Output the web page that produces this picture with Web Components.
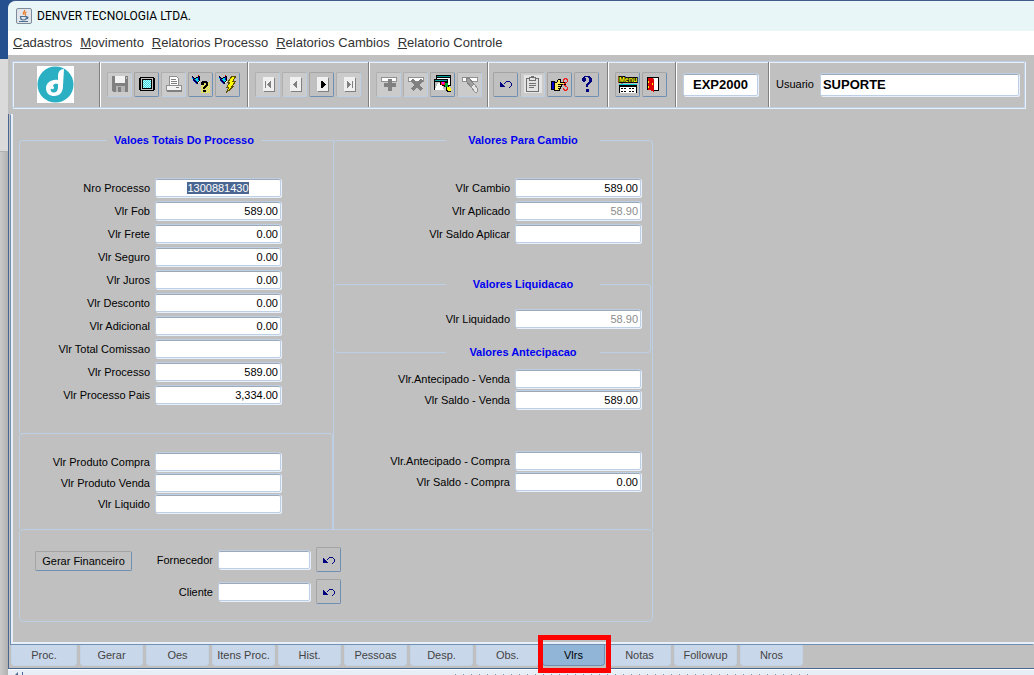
<!DOCTYPE html>
<html lang="pt-BR">
<head>
<meta charset="utf-8">
<title>DENVER TECNOLOGIA LTDA.</title>
<style>
  body {
    margin: 0;
    font: 11px/14px "Liberation Sans", Arial, sans-serif;
    color: #000;
    --face: #c0c0c0;
    --line: #bccfe4;
    --shine: #e8eff8;
    --steel: #6f8fb3;
    --navy: #4a6690;
  }
</style>
</head>
<body>
<app-desktop>
  <app-window caption="DENVER TECNOLOGIA LTDA.">
    <menu-bar slot="menu">
      <menu-entry>Cadastros</menu-entry>
      <menu-entry>Movimento</menu-entry>
      <menu-entry>Relatorios Processo</menu-entry>
      <menu-entry>Relatorios Cambios</menu-entry>
      <menu-entry>Relatorio Controle</menu-entry>
    </menu-bar>
    <tool-bar slot="tools"></tool-bar>
    <values-form></values-form>
    <tab-strip slot="tabs" active="Vlrs"
      labels="Proc.|Gerar|Oes|Itens Proc.|Hist.|Pessoas|Desp.|Obs.|Vlrs|Notas|Followup|Nros"></tab-strip>
  </app-window>
</app-desktop>

<script>
/* ---------- icon drawings ---------- */
const pixels = (rows, colours, ox = 0, oy = 0) => rows.map((row, y) =>
  [...row].map((c, x) => colours[c]
    ? `<rect x="${x + ox}" y="${y + oy}" width="1" height="1" fill="${colours[c]}"/>` : '').join('')).join('');

const undoRows = [
  '......####..',
  '#....#....#.',
  '##..#......#',
  '###........#',
  '####.......#',
  '#####.....#.',
  '.........#..'
];
const plane = pixels([
  '......r.',
  'k.....kk',
  'bk..kkbk',
  'cbkkccbk',
  '.kbcccbk',
  '.bkbccck',
  '..bkbckw',
  '...bkkw.',
  '....bk..'
], {r: '#f00', k: '#000', b: '#0000c0', c: '#00d8e8', w: '#fff'});
const page = body => `<path fill="#f0f0f0" d="M4 2h11v14H4z"/><path fill="#808080" d="M15 3h1v14H5v-1h10z"/>${body}`;
const formWindow = '<path fill="#fff" stroke="#909090" d="M1.500 2.500h15v4h-15z"/>';

const ICONS = {
  save: '<path fill="#808080" d="M1 1h16v16H2l-1-1z"/><path fill="#f2f2f2" d="M4 1h10v7H4z"/><path fill="#b4b4b4" d="M5 11h9v6H5z"/><path fill="#808080" d="M7 12h3v5H7z"/><path fill="#c0c0c0" d="M15 2h1v2h-1z"/>',
  screen: '<path d="M2 2h14v1h1v12h-1v1H2v-1H1V3h1z"/><path fill="#c0c0c0" d="M3 3h12v12H3z"/><path d="M4 4h10v10H4z"/><path fill="#b8ffff" d="M5 5h8v8H5z"/>' +
    pixels(['#.#.#.#.', '.#.#.#.#', '#.#.#.#.', '.#.#.#.#', '#.#.#.#.', '.#.#.#.#', '#.#.#.#.', '.#.#.#.#'], {'#': '#40d8e0'}, 5, 5),
  print: '<path fill="#fff" stroke="#909090" d="M4.500 1.500h7l2 2v7h-9z"/><path stroke="#808080" d="M6 4.500h5M6 6.500h6M6 8.500h6"/><path fill="#f4f4f4" stroke="#909090" d="M1.500 10.500h15v5h-15z"/><path fill="#808080" d="M2 15h15v2H2zM11 12h3v1h-3z"/>',
  query: plane + pixels(['#.#.#.#.#', '.#.#.#.#.', '#.#.#.#.#', '.#.#.#.#.', '#.#.#.#.#', '.#.#.#.#.', '#.#.#.#.#', '.#.#.#.#.', '#.#.#.#.#', '.#.#.#.#.', '#.#.#.#.#'], {'#': '#ffff20'}, 9, 7) +
    '<path d="M9 7h1V6h5v1h1v4h-1v1h-1v1h-1v1h-2v-2h1v-1h1v-1h1V8h-2v2H9zM11 15h3v2h-3z"/>',
  run: plane + '<path fill="#ff0" stroke="#605000" d="M13 1h4l-3 5h3l-4 5h2l-8 7 3-6H8l3-5H9z"/>',
  first: page('<path fill="#808080" d="M6 6h1v7H6zM8 9h1V8h1V7h1V6h1v7h-1v-1h-1v-1H9v-1H8z"/>'),
  prev: page('<path fill="#808080" d="M7 9h1V8h1V7h1V6h1v7h-1v-1H9v-1H8v-1H7z"/>'),
  next: page('<path d="M8 6h2v1h1v1h1v1h1v1h-1v1h-1v1h-1v1H8z"/>'),
  last: page('<path fill="#808080" d="M7 6h1v1h1v1h1v1h1v1h-1v1H9v1H8v1H7zM12 6h1v7h-1z"/>'),
  add: formWindow + '<path fill="#808080" d="M8 4h4v4h4v4h-4v4H8v-4H4V8h4z"/>',
  remove: formWindow + '<path stroke="#808080" stroke-width="3" d="m5 5 10 10m0-10L5 15"/>',
  edit: '<path d="M2 0h15v11H2z"/><path fill="#00a0a0" d="M3 1h13v1H3z"/><path fill="#fff" d="M3 3h13v7H3z"/><path d="M0 4h14v11H0z"/><path fill="#00a0a0" d="M1 5h12v1H1z"/><path fill="#c0c0c0" d="M1 7h12v8H1z"/><path fill="#fff" d="M1 15c1-5 3-7 6-8l3 8z"/><path d="M7 6h4v1h3v3h1v3h-3v-1h-2v-1H8v-1H6V7h1z"/><path fill="#f02020" d="M7 7h4v3H7z"/><path fill="#f0f" d="M8 7h2v2H8z"/><path fill="#00b030" d="M11 8h3v4h-3z"/><path d="M12 12h4v1h1v4h-4v-1h-1z"/><path fill="#ff0" d="M13 12h3v1h1v3h-3v-1h-1z"/>',
  clear: formWindow + '<path fill="#a0a0a0" stroke="#808080" d="m5 4 3-1 5 6-3 3-5-6z"/><path fill="#e8e8e8" stroke="#909090" d="m10 12 3-3 4 5-1 3h-2z"/>',
  undo: pixels(undoRows, {'#': '#000080'}, 3, 6),
  paste: '<path fill="#e4e4e4" d="M0 0h18v18H0z"/><path fill="none" stroke="#707070" d="M6 3.500H2.500v13h12v-13H11M5.500 2.500h6v3h-6zM7 1.500h3M5 8.500h7M5 10.500h7M5 12.500h5"/>',
  cut: '<path fill="#0000d0" stroke="#000" d="M.5 6.500h3v8h-3z"/><path fill="#ffe860" stroke="#000" d="M3.500 7.500h2l2-3h2v3h5v2h-4v2h-1v2h-1v2h-5z"/><path stroke="#000" d="M7 9.500h4M7 11.500h3M7 13.500h2"/><path fill="none" stroke="#f02020" d="M12.500 6.500v-2l2-1 2 1v2l-4 3M12.500 12.500v2l2 1 2-1v-2l-4-3"/>',
  help: '<path fill="#000080" d="M5 2h1V1h6v1h1v1h1v4h-1v1h-1v1h-1v1h-1v2H8V9h1V8h1V7h1V3h-1V2H7v1h1v3H7v1H5V6H4V3h1zM8 14h3v3H8z"/>',
  menu: '<text x="0" y="7" font-family="Liberation Sans, sans-serif" font-size="7" font-weight="bold" fill="#ff0" stroke="#000" stroke-width="2" paint-order="stroke">Menu</text><path d="M0 10h18v8H0z"/><path fill="#00d0d0" d="M0 9h18v1H0z"/><path fill="#fff" d="M1 12h16v6H1z"/><path stroke="#000" stroke-dasharray="2 1" d="M2 13.500h5M10 13.500h6M2 16.500h5M10 16.500h6"/>',
  exit: '<path fill="#fff" d="M8 3h5v13H8z"/><path fill="none" stroke="#000" d="M1.500 15V2.500h11v13H8"/><path fill="#e00000" d="M2 3h4l2 2v12l-4-2H2z"/><path fill="#ff0" d="M6 8h1v2H6zM2 6h1v2H2zM2 11h1v2H2z"/>'
};
const icon = name => `<svg width="18" height="18" viewBox="0 0 18 18" shape-rendering="crispEdges" aria-hidden="true">${ICONS[name]}</svg>`;

const FIELD = `
  input {
    box-sizing: border-box; margin: 0; border: 1px solid var(--line); border-radius: 2px;
    background: #fff; box-shadow: inset 0 1px #9fa9b5, 1px 1px var(--shine);
    font: inherit; color: #000; outline: none; min-width: 0;
  }`;

const define = (name, html, setup) => customElements.define(name, class extends HTMLElement {
  connectedCallback() {
    if (this.shadowRoot) return;
    const root = this.attachShadow({mode: 'open'});
    root.innerHTML = html;
    if (setup) setup.call(this, root);
  }
});

/* ---------- desktop behind the window ---------- */
define('app-desktop', `
  <style>
    :host { display: flex; min-height: 100vh; background: #24508f; }
    .behind { flex: 0 0 8px; display: flex; flex-direction: column; }
    .top { height: 59px; background: #24508f; }
    .mid { height: 92px; background: #dadada; border-bottom: 1px solid #b0b0b0; }
    .low { flex: 1; background: linear-gradient(90deg, #cacaca, #b0b0b0); }
    ::slotted(*) { flex: 1; min-width: 0; }
  </style>
  <div class="behind"><div class="top"></div><div class="mid"></div><div class="low"></div></div>
  <slot></slot>`);

/* ---------- window frame ---------- */
define('app-window', `
  <style>
    :host { display: flex; flex-direction: column; background: var(--face); border-top: 1px solid #3f5b8c; border-top-left-radius: 8px; overflow: hidden; }
    header { display: flex; align-items: center; gap: 5px; height: 30px; padding-left: 8px; background: #e8f6f7; }
    h1 { margin: 0; font: 12px/16px Roboto, "Open Sans", sans-serif; }
    .content { flex: 1; display: flex; flex-direction: column; border-left: 1px solid var(--navy); margin-top: 6px; padding-left: 2px; }
    main { flex: 1; border: solid var(--shine); border-width: 0 0 2px 2px; box-shadow: -1px 1px var(--steel); }
    .tabs { padding-top: 1px; }
    footer { display: flex; align-items: flex-end; height: 6px; border-top: 1px solid var(--navy); box-shadow: inset 0 1px #fff; background: #e8eef6; }
    .arrow { display: block; width: 14px; height: 3px; border-right: 1px solid var(--navy); }
    .grip { margin: 0 auto 0 432px; width: 360px; height: 1px; background: repeating-linear-gradient(90deg, #7f93ad 0 1px, transparent 1px 8px); }
  </style>
  <header>
    <svg width="16" height="16" viewBox="0 0 16 16" aria-hidden="true">
      <rect x=".5" y=".5" width="15" height="15" rx="1.500" fill="#e2e6ea" stroke="#7d8c9a"/>
      <path d="M8.500 2c1 1.500-2 2.500-1 4.500M10.500 4c-2 1-2 2-.5 3.500" fill="none" stroke="#e8761f" stroke-width="1.300"/>
      <path d="M4.500 8.500h6c0 3-1 3.500-3 3.500s-3-.5-3-3.500zM10.500 9c2-.5 2 1.500-.5 2M3 13.500h9" fill="none" stroke="#4f7196" stroke-width="1.200"/>
    </svg>
    <h1></h1>
  </header>
  <slot name="menu"></slot>
  <slot name="tools"></slot>
  <div class="content">
    <main><slot></slot></main>
    <div class="tabs"><slot name="tabs"></slot></div>
  </div>
  <footer>
    <svg class="arrow" viewBox="0 0 14 3" aria-hidden="true"><path fill="#4a6690" d="M10 0v3H7z"/></svg>
    <div class="grip"></div>
  </footer>`,
  function (root) { root.querySelector('h1').textContent = this.getAttribute('caption'); });

/* ---------- menu ---------- */
define('menu-bar', `
  <style>
    :host { display: block; background: #fff; }
    nav { display: flex; align-items: center; gap: 8px; height: 24px; padding-left: 5px; }
  </style>
  <nav><slot></slot></nav>`);

define('menu-entry', `
  <style>
    :host { display: block; }
    button { display: block; border: 0; padding: 0; background: none; font: 13px/16px "Liberation Sans", Arial, sans-serif; color: #333; white-space: nowrap; }
  </style>
  <button type="button"><u></u><span></span></button>`,
  function (root) {
    const text = this.textContent.trim();
    root.querySelector('u').textContent = text[0];
    root.querySelector('span').textContent = text.slice(1);
    this.textContent = '';
  });

/* ---------- toolbar ---------- */
define('tool-button', `
  <style>
    :host { display: block; }
    button {
      display: grid; place-items: center; box-sizing: border-box; width: 25px; height: 25px; padding: 0;
      border: 1px solid; border-color: #a4a4a4 var(--steel) var(--steel) #a4a4a4; border-radius: 2px; background: var(--face);
    }
    button:disabled { background: #cbcbcb; border-color: #b0b0b0 var(--line) var(--line) #b0b0b0; }
    svg { display: block; overflow: visible; }
  </style>
  <button type="button"></button>`,
  function (root) {
    const b = root.querySelector('button');
    b.innerHTML = icon(this.getAttribute('icon'));
    b.title = b.ariaLabel = this.getAttribute('hint');
    b.disabled = this.hasAttribute('off');
  });

define('tool-bar', `
  <style>
    :host { display: block; padding: 6px 9px 0 4px; }
    .bar { display: flex; height: 45px; border: 1px solid var(--line); box-shadow: inset 0 1px var(--shine), 1px 1px var(--shine), inset 1px 0 var(--shine); }
    .cell { display: flex; align-items: center; box-sizing: border-box; gap: 2px; padding: 0 0 1px 6px; border-right: 1px solid #fff; box-shadow: inset -1px 0 #808080; }
    .logo { width: 88px; justify-content: center; padding: 0 2px 1px 0; }
    .file { width: 148px; } .walk { width: 121px; } .rec { width: 119px; } .misc { width: 120px; padding-left: 4px; }
    .out { width: 68px; } .code { width: 93px; }
    .user { flex: 1; border: 0; box-shadow: none; gap: 6px; padding-right: 5px; }
    ${FIELD}
    input { height: 23px; padding: 0 2px; font-weight: bold; font-size: 13px; }
    .code input { width: 75px; text-align: center; }
    .user input { flex: 1; }
    svg { display: block; }
  </style>
  <div class="bar">
    <div class="cell logo">
      <svg width="37" height="37" viewBox="0 0 37 37" role="img" aria-label="Denver">
        <path fill="#fff" d="M0 0h37v37H0z"/><circle cx="18.500" cy="18.500" r="18" fill="#2bafc2"/>
        <path fill="#fff" d="M27 3c-4 0-6 3-6 7v4c-7-1-12 3-12 8.500 0 5 4 7.500 8 7.500 6 0 9-4 9-10z"/>
        <path fill="#2bafc2" d="M21 18v3.500c0 3-2 5-4 5-3 0-4-2-3-4 1 1 3 1 3-1 0-1-1-1-1-2 1-2 3-2 5-1.500z"/>
      </svg>
    </div>
    <div class="cell file">
      <tool-button icon="save" hint="Salvar" off></tool-button><tool-button icon="screen" hint="Tela"></tool-button>
      <tool-button icon="print" hint="Imprimir" off></tool-button><tool-button icon="query" hint="Consultar"></tool-button>
      <tool-button icon="run" hint="Executar"></tool-button>
    </div>
    <div class="cell walk">
      <tool-button icon="first" hint="Primeiro" off></tool-button><tool-button icon="prev" hint="Anterior" off></tool-button>
      <tool-button icon="next" hint="Proximo"></tool-button><tool-button icon="last" hint="Ultimo" off></tool-button>
    </div>
    <div class="cell rec">
      <tool-button icon="add" hint="Incluir" off></tool-button><tool-button icon="remove" hint="Excluir" off></tool-button>
      <tool-button icon="edit" hint="Editar"></tool-button><tool-button icon="clear" hint="Limpar" off></tool-button>
    </div>
    <div class="cell misc">
      <tool-button icon="undo" hint="Desfazer"></tool-button><tool-button icon="paste" hint="Colar" off></tool-button>
      <tool-button icon="cut" hint="Recortar"></tool-button><tool-button icon="help" hint="Ajuda"></tool-button>
    </div>
    <div class="cell out">
      <tool-button icon="menu" hint="Menu"></tool-button><tool-button icon="exit" hint="Sair"></tool-button>
    </div>
    <div class="cell code"><input value="EXP2000" aria-label="Programa" readonly></div>
    <div class="cell user"><label for="user">Usuario</label><input id="user" value="SUPORTE" readonly></div>
  </div>`);

/* ---------- form parts ---------- */
define('value-field', `
  <style>
    :host { display: grid; grid-template-columns: var(--label-width) var(--field-width, 126px); gap: 5px; align-items: center; }
    label { text-align: right; white-space: nowrap; }
    ${FIELD}
    input { height: 19px; padding: 1px 2px 0; text-align: right; }
    input:disabled { color: #8c8c8c; }
    input.marked { text-align: center; }
    input::selection { background: var(--navy); color: #fff; }
  </style>
  <label for="f"></label><input id="f">`,
  function (root) {
    const input = root.querySelector('input');
    root.querySelector('label').textContent = this.getAttribute('label');
    input.value = this.getAttribute('value') || '';
    input.disabled = this.hasAttribute('off');
    if (this.hasAttribute('marked')) {
      input.className = 'marked';
      input.focus({preventScroll: true});
      input.select();
    }
  });

define('field-group', `
  <style>
    :host { display: block; box-sizing: border-box; border: 0 solid var(--line); }
    h2 {
      width: 154px; height: 14px; margin: -8px 0 0 var(--title-left); background: var(--face);
      font: bold 11px/14px "Liberation Sans", Arial, sans-serif; color: #0000f0; text-align: center; white-space: nowrap;
    }
    .rows { display: grid; gap: var(--row-gap, 4px); padding-top: var(--rows-top); }
  </style>
  <h2></h2><div class="rows"><slot></slot></div>`,
  function (root) {
    const h = root.querySelector('h2');
    if (this.hasAttribute('heading')) h.textContent = this.getAttribute('heading'); else h.remove();
  });

define('values-form', `
  <style>
    :host { display: block; padding: 26px 6px 20px; }
    .sheet { display: grid; grid-template-columns: 314px 320px; }
    .left { --label-width: 130px; --title-left: 87px; }
    .right { --label-width: 176px; --title-left: 112px; border-right: 1px solid var(--line); border-left: 1px solid var(--line); border-top-right-radius: 4px; }
    .totals { min-height: 293px; --rows-top: 31px; border-width: 1px 0 0 1px; border-radius: 4px 0 0 0; }
    .products { height: 96px; --rows-top: 18px; --row-gap: 2px; border-width: 1px 1px 0 1px; border-radius: 4px 4px 0 0; }
    .exchange { height: 144px; --rows-top: 31px; border-width: 1px 0 0; border-radius: 4px 4px 0 0; }
    .settled { height: 69px; --rows-top: 18px; border-width: 1px; border-left-width: 0; margin-right: 1px; border-radius: 4px; }
    .advance { --rows-top: 10px; --row-gap: 2px; }
    .purchase { --rows-top: 42px; --row-gap: 2px; }
    .actions { grid-column: 1 / -1; display: grid; grid-template-columns: 97px 1fr; align-items: start; box-sizing: border-box; height: 93px; padding: 17px 15px 0; border: 1px solid var(--line); border-radius: 4px; }
    .run { height: 20px; margin-top: 4px; padding: 0; border: 1px solid; border-color: #a4a4a4 var(--steel) var(--steel) #a4a4a4; border-radius: 2px; background: var(--face); font: inherit; color: #000; }
    .parties { display: grid; gap: 7px; --label-width: 81px; --field-width: 92px; }
    .party { display: flex; align-items: center; gap: 6px; }
  </style>
  <form class="sheet" onsubmit="return false">
    <div class="left">
      <field-group class="totals" heading="Valoes Totais Do Processo">
        <value-field label="Nro Processo" value="1300881430" marked></value-field>
        <value-field label="Vlr Fob" value="589.00"></value-field>
        <value-field label="Vlr Frete" value="0.00"></value-field>
        <value-field label="Vlr Seguro" value="0.00"></value-field>
        <value-field label="Vlr Juros" value="0.00"></value-field>
        <value-field label="Vlr Desconto" value="0.00"></value-field>
        <value-field label="Vlr Adicional" value="0.00"></value-field>
        <value-field label="Vlr Total Comissao"></value-field>
        <value-field label="Vlr Processo" value="589.00"></value-field>
        <value-field label="Vlr Processo Pais" value="3,334.00"></value-field>
      </field-group>
      <field-group class="products">
        <value-field label="Vlr Produto Compra"></value-field>
        <value-field label="Vlr Produto Venda"></value-field>
        <value-field label="Vlr Liquido"></value-field>
      </field-group>
    </div>
    <div class="right">
      <field-group class="exchange" heading="Valores Para Cambio">
        <value-field label="Vlr Cambio" value="589.00"></value-field>
        <value-field label="Vlr Aplicado" value="58.90" off></value-field>
        <value-field label="Vlr Saldo Aplicar"></value-field>
      </field-group>
      <field-group class="settled" heading="Valores Liquidacao">
        <value-field label="Vlr Liquidado" value="58.90" off></value-field>
      </field-group>
      <field-group class="advance" heading="Valores Antecipacao">
        <value-field label="Vlr.Antecipado - Venda"></value-field>
        <value-field label="Vlr Saldo - Venda" value="589.00"></value-field>
      </field-group>
      <field-group class="purchase">
        <value-field label="Vlr.Antecipado - Compra"></value-field>
        <value-field label="Vlr Saldo - Compra" value="0.00"></value-field>
      </field-group>
    </div>
    <div class="actions">
      <button type="button" class="run">Gerar Financeiro</button>
      <div class="parties">
        <div class="party"><value-field label="Fornecedor"></value-field><tool-button icon="undo" hint="Desfazer fornecedor"></tool-button></div>
        <div class="party"><value-field label="Cliente"></value-field><tool-button icon="undo" hint="Desfazer cliente"></tool-button></div>
      </div>
    </div>
  </form>`);

/* ---------- page tabs ---------- */
define('tab-strip', `
  <style>
    :host { display: block; }
    div { display: flex; gap: 3px; height: 23px; }
    button {
      position: relative; width: 63px; height: 21px; padding: 0; border: 1px solid #c2d3e8; border-top: 0;
      border-radius: 0 0 4px 4px; background: #c9d7ea; font: inherit; color: #444; white-space: nowrap;
    }
    button:first-child { width: 66px; }
    button[aria-selected=true] { background: #91b5d6; border-color: var(--steel); color: #000; }
    button[aria-selected=true]::after { content: ""; position: absolute; inset: -10px -7px -8px -5px; border: 5px solid #f00; z-index: 1; }
  </style>
  <div role="tablist"></div>`,
  function (root) {
    const list = root.querySelector('div');
    for (const name of this.getAttribute('labels').split('|')) {
      const tab = document.createElement('button');
      tab.type = 'button';
      tab.textContent = name;
      tab.setAttribute('role', 'tab');
      tab.setAttribute('aria-selected', name === this.getAttribute('active'));
      list.append(tab);
    }
  });
</script>
</body>
</html>
